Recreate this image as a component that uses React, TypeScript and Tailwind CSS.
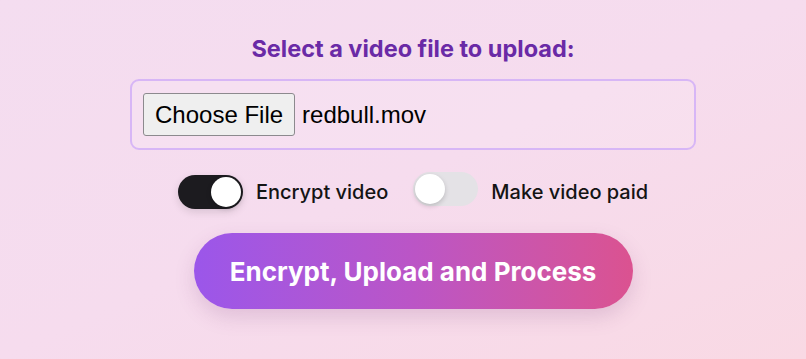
import { useState } from "react";

function Toggle({ on, onChange }: { on: boolean; onChange: () => void }) {
  return (
    <button
      type="button"
      onClick={onChange}
      className={`relative h-[34px] w-[65px] shrink-0 rounded-full ${
        on ? "bg-[#1c1b1f] shadow-[0_3px_8px_rgba(0,0,0,0.12)]" : "bg-[#e4e2e6]"
      }`}
    >
      <span
        className={`absolute top-[2px] h-[30px] w-[30px] rounded-full bg-white shadow-[0_2px_5px_rgba(0,0,0,0.18)] ${
          on ? "left-[33px]" : "left-[2px]"
        }`}
      />
    </button>
  );
}

export default function App() {
  const [encrypt, setEncrypt] = useState(true);
  const [paid, setPaid] = useState(false);

  return (
    <div
      className="flex h-[359px] w-full flex-col items-center bg-gradient-to-br from-[#f4ddf0] via-[#f6dcee] to-[#f9d9e4] pl-5 pt-[35px]"
      style={{ fontFamily: "Inter, 'Noto Sans', sans-serif" }}
    >
      <h2 className="text-[23.5px] font-bold leading-[28px] text-[#6a2aa6]">Select a video file to upload:</h2>

      <div className="mt-[16px] flex h-[71px] w-[566px] items-center gap-[7px] rounded-[9px] border-2 border-[#d7b6f6] bg-white/10 px-[11px]">
        <button
          type="button"
          className="h-[43px] rounded-[3px] border border-[#8c8a8e] bg-[#efefef] px-[11px] text-[24px] leading-none text-black"
          style={{ fontFamily: "'Liberation Sans', Arial, sans-serif" }}
        >
          Choose File
        </button>
        <span className="text-[24px] text-black" style={{ fontFamily: "'Liberation Sans', Arial, sans-serif" }}>
          redbull.mov
        </span>
      </div>

      <div className="mt-[25px] flex h-[34px] items-center">
        <Toggle on={encrypt} onChange={() => setEncrypt(!encrypt)} />
        <span className="ml-[13px] text-[20px] font-medium text-[#141414]">Encrypt video</span>
        <div className="ml-[25px]">
          <Toggle on={paid} onChange={() => setPaid(!paid)} />
        </div>
        <span className="ml-[13px] text-[20px] font-medium text-[#141414]">Make video paid</span>
      </div>

      <button
        type="button"
        className="mt-[24px] h-[76px] w-[439px] rounded-full bg-gradient-to-r from-[#9b56ea] via-[#bb55c6] to-[#db5290] text-[26px] font-bold text-white shadow-[0_8px_20px_rgba(120,60,120,0.18)]"
      >
        Encrypt, Upload and Process
      </button>
    </div>
  );
}
